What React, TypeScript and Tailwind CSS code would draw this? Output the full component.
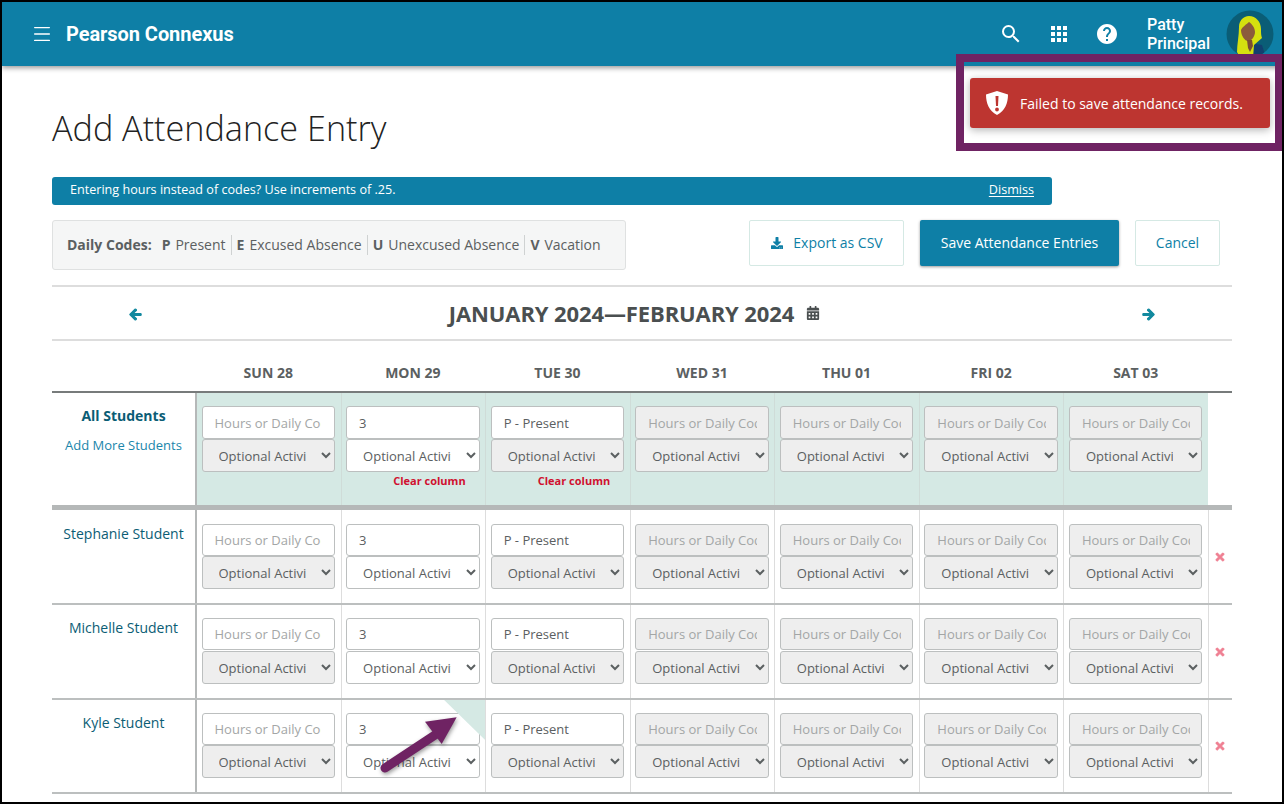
import { Menu } from 'lucide-react';
import { FaArrowLeft, FaArrowRight, FaCalendarAlt, FaDownload, FaTimes } from 'react-icons/fa';
import { MdApps, MdHelp, MdSearch } from 'react-icons/md';

const days = ['SUN 28', 'MON 29', 'TUE 30', 'WED 31', 'THU 01', 'FRI 02', 'SAT 03'];
const students = [
  { name: 'Stephanie Student', row: 'h-[95px]', top: 'pt-[14px]', gap: 'mt-0' },
  { name: 'Michelle Student', row: 'h-[95px]', top: 'pt-[13px]', gap: 'mt-[1px]' },
  { name: 'Kyle Student', row: 'h-[94px]', top: 'pt-[13px]', gap: 'mt-0' },
];
const codes = [
  { key: 'P', label: 'Present' },
  { key: 'E', label: 'Excused Absence' },
  { key: 'U', label: 'Unexcused Absence' },
  { key: 'V', label: 'Vacation' },
];

const rowGrid = 'grid grid-cols-[144px_repeat(7,minmax(0,1fr))_24px]';

function DayCell({ index, clear, inputHeight, gap }: { index: number; clear?: boolean; inputHeight: string; gap: string }) {
  const value = index === 1 ? '3' : index === 2 ? 'P - Present' : '';
  const disabled = index > 2;
  return (
    <div className="flex flex-col">
      <input
        readOnly
        value={value}
        placeholder="Hours or Daily Code"
        className={`${inputHeight} w-full rounded-[3px] border border-[#bcbfbf] pl-[12px] text-[13px] text-[#5b6061] outline-none placeholder:text-[#a3a6a6] ${disabled ? 'bg-[#eeeeee] pr-[11px]' : 'bg-white pr-[13px]'}`}
      />
      <select
        className={`${gap} h-[33px] w-full rounded-[3px] border border-[#bcbfbf] pl-[12px] pr-[12px] text-[13px] text-[#5b6061] outline-none ${index === 1 ? 'bg-white' : 'bg-[#eeeeee]'}`}
      >
        <option>Optional Activity</option>
      </select>
      {clear && index < 3 && index > 0 && (
        <span className="mt-[2px] pr-[14px] text-right text-[11px] font-bold leading-[14px] text-[#d0102f]">
          Clear column
        </span>
      )}
    </div>
  );
}

function Avatar() {
  return (
    <svg viewBox="0 0 48 48" className="h-[48px] w-[48px]">
      <clipPath id="avatar-clip">
        <circle cx="24" cy="24" r="23.5" />
      </clipPath>
      <g clipPath="url(#avatar-clip)">
        <rect width="48" height="48" fill="#0a5d76" />
        <path d="M24 33l12 2 4 13H12l2-9z" fill="#12406f" />
        <path d="M23 6c-6 0-10 5-10 11 0 9-2 17-2 25l3 6h13l1-13 8-7c-1-3-1-5-1-9 0-7-5-13-12-13z" fill="#d5e00f" />
        <path d="M23 12c-2 2-7 5-8 8 0 6 4 11 7 11 4 0 7-5 7-9 0-4-3-8-6-10z" fill="#8b5a3c" />
        <path d="M21 30h5l1 6-3 6-2-4z" fill="#7a4d33" />
      </g>
    </svg>
  );
}

export default function App() {
  return (
    <div
      className="relative h-[804px] w-[1284px] overflow-hidden border-2 border-black bg-white text-[#5b6061]"
      style={{ fontFamily: '"Open Sans", sans-serif' }}
    >
      {/* Top bar */}
      <header
        className="flex h-[64px] items-center bg-[#0e7fa6] pl-[29px] pr-[8px] text-white shadow-[0_2px_5px_rgba(0,0,0,0.4)]"
        style={{ fontFamily: 'Roboto, sans-serif' }}
      >
        <Menu size={22} strokeWidth={1.5} />
        <span className="ml-[13px] text-[20px] font-bold tracking-[-0.003em]">Pearson Connexus</span>
        <div className="ml-auto flex items-center">
          <MdSearch size={24} />
          <MdApps size={24} className="ml-[24px]" />
          <MdHelp size={24} className="ml-[24px]" />
          <div className="ml-[28px] w-[79px] text-[16px] font-medium leading-[19px]">
            Patty
            <br />
            Principal
          </div>
          <Avatar />
        </div>
      </header>

      {/* Page */}
      <main className="pl-[50px] pr-[50px]">
        <h1 className="mt-[37px] text-[34.2px] font-light leading-[50px] text-[#222]">Add Attendance Entry</h1>

        <div className="mt-[24px] flex h-[28px] w-[1000px] items-center justify-between rounded-[3px] bg-[#0e7fa6] pb-[1px] pl-[18px] pr-[18px] text-[12.6px] text-white">
          <span>Entering hours instead of codes? Use increments of .25.</span>
          <span className="underline underline-offset-2">Dismiss</span>
        </div>

        <div className="mt-[15px] flex items-start justify-between pr-[12px]">
          <div className="flex h-[50px] w-[574px] items-center rounded-[3px] border border-[#dfe1e1] bg-[#f5f6f6] pb-[1px] pl-[14px] text-[14px]">
            <span className="mr-[10px] font-bold">Daily Codes:</span>
            {codes.map((code, i) => (
              <span
                key={code.key}
                className={`flex h-[20px] items-center pr-[5px] ${i > 0 ? 'border-l border-[#cfd2d2] pl-[5px]' : ''}`}
              >
                <b className="mr-[5px]">{code.key}</b>
                {code.label}
              </span>
            ))}
          </div>

          <div className="flex text-[14px]">
            <button className="flex h-[46px] w-[155px] items-center justify-center gap-[10px] rounded-[2px] border border-[#d5e9e4] pb-[1px] pl-[1px] text-[#0e7fa6]">
              <FaDownload size={12} />
              Export as CSV
            </button>
            <button className="ml-[16px] h-[46px] w-[199px] rounded-[2px] bg-[#0e7fa6] pb-[1px] text-white shadow-[0_1px_3px_rgba(0,0,0,0.4)]">
              Save Attendance Entries
            </button>
            <button className="ml-[16px] h-[46px] w-[85px] rounded-[2px] border border-[#d5e9e4] pb-[1px] text-[#0e7fa6]">
              Cancel
            </button>
          </div>
        </div>

        {/* Month nav */}
        <div className="mt-[15px] flex h-[56px] items-center justify-between border-y-2 border-[#dddddd] px-[77px]">
          <FaArrowLeft size={13} stroke="currentColor" strokeWidth={40} className="mt-[2px] text-[#12899f]" />
          <div className="mr-[15px] flex items-center text-[22px] font-bold tracking-[-0.005em] text-[#4a4f50]">
            JANUARY 2024—FEBRUARY 2024
            <FaCalendarAlt size={14} className="ml-[12px]" />
          </div>
          <FaArrowRight size={13} stroke="currentColor" strokeWidth={40} className="mt-[2px] text-[#12899f]" />
        </div>

        {/* Day headers */}
        <div className={`${rowGrid} h-[52px] border-b-2 border-[#777b7b]`}>
          <div />
          {days.map((day) => (
            <div key={day} className="flex items-center justify-center pt-[12px] text-[14px] font-bold">
              {day}
            </div>
          ))}
          <div />
        </div>

        {/* All students */}
        <div className={`${rowGrid} h-[117px] border-b-[5px] border-[#b5b8b8]`}>
          <div className="flex flex-col items-center border-r border-[#b5b8b8] pt-[13px]">
            <span className="text-[14px] font-bold leading-[20px] text-[#0b5d75]">All Students</span>
            <span className="mt-[10px] text-[13px] leading-[18px] text-[#1a86ab]">Add More Students</span>
          </div>
          {days.map((day, i) => (
            <div
              key={day}
              className={`border-l bg-[#d5e9e4] pl-[4.5px] pr-[5.5px] pt-[13px] ${i === 0 ? 'border-[#b5b8b8]' : 'border-[#cfdcd8]'}`}
            >
              <DayCell index={i} clear inputHeight="h-[33px]" gap="mt-0" />
            </div>
          ))}
          <div />
        </div>

        {/* Student rows */}
        {students.map((student, r) => (
          <div key={student.name} className={`${rowGrid} ${student.row} border-b-2 border-[#bcbfbf]`}>
            <div className={`border-r border-[#b5b8b8] ${student.top} text-center text-[14px] leading-[20px] text-[#0b5d75]`}>
              {student.name}
            </div>
            {days.map((day, i) => (
              <div
                key={day}
                className={`relative border-l pl-[4.5px] pr-[5.5px] ${student.top} ${i === 0 ? 'border-[#b5b8b8]' : 'border-[#dddddd]'}`}
              >
                <DayCell index={i} inputHeight="h-[32px]" gap={student.gap} />
                {r === 2 && i === 1 && (
                  <div className="absolute right-0 top-0 h-[40px] w-[41px] bg-[#d5e9e4] [clip-path:polygon(0_0,100%_0,100%_100%)]" />
                )}
              </div>
            ))}
            <div className="flex items-center justify-center border-l border-[#dddddd]">
              <FaTimes size={12} stroke="currentColor" strokeWidth={30} className="text-[#ef7f92]" />
            </div>
          </div>
        ))}
      </main>

      {/* Annotation arrow */}
      <svg viewBox="0 0 100 70" className="absolute left-[368px] top-[708px] h-[70px] w-[100px] drop-shadow-[1px_2px_2px_rgba(0,0,0,0.4)]">
        <path d="M15 58 L68 23" stroke="#6f2363" strokeWidth="9" strokeLinecap="round" fill="none" />
        <path d="M86.7 7.3 L55 11.7 L71.7 34 Z" fill="#6f2363" />
      </svg>

      {/* Toast with annotation box */}
      <div className="absolute left-[954px] top-[52px] h-[97px] w-[327px] border-8 border-[#6f2363]">
        <div className="ml-[6px] mt-[16px] flex h-[50px] w-[300px] items-center rounded-[3px] bg-[#bd3530] pl-[16px] text-[14px] text-white shadow-[0_2px_8px_rgba(0,0,0,0.3)]">
          <svg viewBox="0 0 22 24" className="h-[24px] w-[22px]">
            <path
              fillRule="evenodd"
              fill="#ffffff"
              d="M11 0 L22 3.5 C22 12 19 20 11 24 C3 20 0 12 0 3.5 Z M9.5 5 L12.5 5 L12 15 L10 15 Z M11 16.6 A1.9 1.9 0 1 0 11 20.4 A1.9 1.9 0 1 0 11 16.6 Z"
            />
          </svg>
          <span className="ml-[12px]">Failed to save attendance records.</span>
        </div>
      </div>
    </div>
  );
}
